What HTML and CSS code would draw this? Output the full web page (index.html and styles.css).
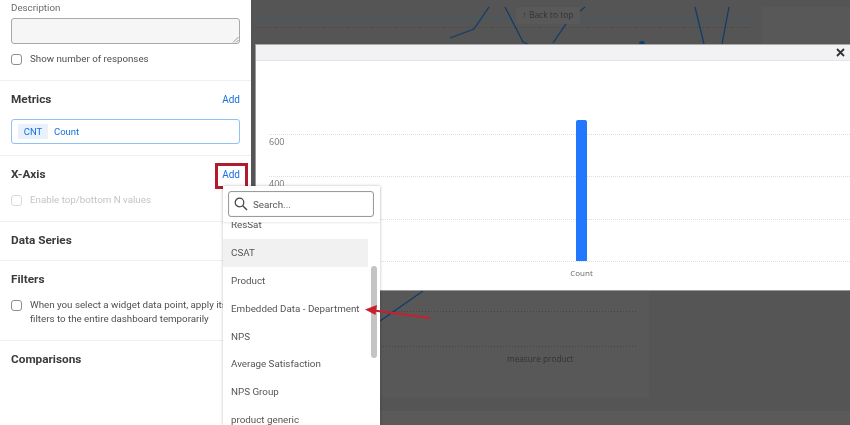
FILE: index.html
```html
<!DOCTYPE html>
<html lang="en">
<head>
<meta charset="utf-8">
<title>Widget editor</title>
<link rel="stylesheet" href="styles.css">
</head>
<body>
<div class="stage">
  <aside class="panel">
    <section class="sec sec-desc">
      <div class="label">Description</div>
      <div class="textarea">
        <svg class="grip" width="7" height="7" viewBox="0 0 7 7"><path d="M1 6.5 6.5 1M4 6.5 6.5 4" stroke="#999" fill="none"/></svg>
      </div>
      <div class="check-row"><span class="box"></span><span>Show number of responses</span></div>
    </section>
    <section class="sec sec-metrics">
      <div class="sec-head"><h3>Metrics</h3><a class="add">Add</a></div>
      <div class="metric"><span class="chip">CNT</span><span>Count</span></div>
    </section>
    <section class="sec sec-x">
      <div class="sec-head"><h3>X-Axis</h3><a class="add add-marked">Add</a></div>
      <div class="check-row disabled"><span class="box"></span><span>Enable top/bottom N values</span></div>
    </section>
    <section class="sec sec-series">
      <div class="sec-head"><h3>Data Series</h3></div>
    </section>
    <section class="sec sec-filters">
      <div class="sec-head"><h3>Filters</h3></div>
      <div class="check-row wrap"><span class="box"></span><span>When you select a widget data point, apply its<br>filters to the entire dashboard temporarily</span></div>
    </section>
    <section class="sec sec-comp">
      <div class="sec-head"><h3>Comparisons</h3></div>
    </section>
  </aside>

  <div class="backdrop">
    <div class="card card-right"></div>
    <div class="card card-low"></div>
    <div class="band"></div>
    <svg class="bg-lines" width="600" height="425" viewBox="250 0 600 425">
      <path d="M250 19H515M580 19H750" stroke="#3f6068" stroke-width="1" fill="none"/>
      <path d="M250 27.500H750M383 311.500H638M383 346.500H638" stroke="#444" stroke-dasharray="1 2" fill="none"/>
      <path d="M450 38 474 29 489 7M505 7 523 42 528 44M553 43 568 21 585 7M695 7 704 44M729 7 722 44M380 321 423 291" stroke="#123c69" stroke-width="1.300" fill="none"/>
      <circle cx="642" cy="44" r="3" fill="#123c69"/>
    </svg>
    <div class="back-top">↑ Back to top</div>
    <div class="measure">measure product</div>
  </div>

  <div class="modal">
    <div class="modal-head">
      <svg width="9" height="9" viewBox="0 0 9 9"><path d="M1 1 8 8M8 1 1 8" stroke="#333" stroke-width="1.800" fill="none"/></svg>
    </div>
    <div class="chart">
      <div class="grid-row first"><span class="tick">600</span></div>
      <div class="grid-row"><span class="tick">400</span></div>
      <div class="grid-row"></div>
      <div class="grid-row"></div>
      <div class="bar"></div>
      <div class="cat">Count</div>
    </div>
  </div>

  <div class="drop">
    <div class="search-wrap">
      <div class="search">
        <svg width="14" height="14" viewBox="0 0 14 14"><circle cx="5.500" cy="5.500" r="4.300" stroke="#444" stroke-width="1.200" fill="none"/><path d="M8.700 8.700 13 13" stroke="#444" stroke-width="1.400" fill="none"/></svg>
        <span>Search...</span>
      </div>
    </div>
    <div class="list">
      <div class="items">
        <div class="item">ResSat</div>
        <div class="item active">CSAT</div>
        <div class="item">Product</div>
        <div class="item">Embedded Data - Department</div>
        <div class="item">NPS</div>
        <div class="item">Average Satisfaction</div>
        <div class="item">NPS Group</div>
        <div class="item">product generic</div>
      </div>
      <div class="track"><div class="thumb"></div></div>
    </div>
  </div>

  <svg class="arrow" width="70" height="16" viewBox="364 304 70 16">
    <path d="M374 310.500 430 318" stroke="#c8202f" stroke-width="2.200" fill="none"/>
    <path d="M365 309.500 377 305 375.500 315Z" fill="#c8202f"/>
  </svg>
</div>
</body>
</html>
```

FILE: styles.css
```css
* { box-sizing: border-box; }
html, body { margin: 0; padding: 0; }
body { width: 850px; height: 425px; overflow: hidden; font-family: Roboto, "Liberation Sans", sans-serif; color: #525252; }
.stage { position: relative; width: 850px; height: 425px; overflow: hidden; background: #555; filter: blur(.3px); }

.panel { position: relative; z-index: 2; width: 251px; height: 425px; background: #fff; overflow: hidden; font-size: 9.750px; }
.sec { padding: 0 11px; border-bottom: 1px solid #efefef; }
.sec-comp { border-bottom: 0; }
.sec-desc { height: 81px; }
.sec-metrics { height: 75px; }
.sec-x { height: 66px; }
.sec-series { height: 39px; }
.sec-filters { height: 80px; }
.label { height: 18px; padding-top: 1px; line-height: 14px; color: #6b6b6b; }
.textarea { position: relative; width: 229px; height: 26px; border: 1px solid #a9a9a9; border-radius: 3px; background: #f6f6f6; }
.grip { position: absolute; right: 0; bottom: 0; }
.check-row { display: flex; align-items: center; gap: 8px; height: 12px; margin-top: 9px; color: #4f4f4f; line-height: 14px; }
.box { flex: none; width: 11px; height: 11px; border: 1px solid #8e8e8e; border-radius: 3px; background: #fff; }
.check-row.disabled { color: #c4c4c4; margin-top: 2px; }
.check-row.disabled .box { border-color: #d9d9d9; }
.check-row.wrap { align-items: flex-start; height: 28px; margin-top: 1px; }
.check-row.wrap .box { margin-top: 2px; }
.check-row.wrap span + span { white-space: nowrap; }
.sec-head { display: flex; justify-content: space-between; align-items: center; height: 36px; }
h3 { margin: 0; font-size: 11.800px; font-weight: 700; color: #3b3b3b; }
.add { color: #1670e0; font-size: 10px; }
.add-marked { position: relative; }
.add-marked::after { content: ""; position: absolute; left: -7px; right: -8px; top: 50%; margin-top: -11px; height: 20px; border: 3px solid #b01c2e; }
.metric { display: flex; align-items: center; gap: 6px; width: 229px; height: 25px; margin-top: 2px; padding: 0 6px; border: 1px solid #8fc0f6; border-radius: 3px; color: #1670e0; font-size: 9.500px; }
.chip { width: 30px; height: 15px; line-height: 15px; text-align: center; background: #e9f2fc; }

.backdrop { position: absolute; inset: 0; z-index: 0; font-family: "Open Sans", sans-serif; }
.card { position: absolute; background: #585858; }
.card-right { left: 762px; top: 7px; width: 88px; height: 40px; }
.card-low { left: 251px; top: 280px; width: 398px; height: 118px; }
.band { position: absolute; left: 251px; right: 0; top: 411px; height: 14px; background: #5a5a5a; }
.bg-lines { position: absolute; left: 250px; top: 0; }
.back-top { position: absolute; left: 516px; top: 7px; width: 64px; height: 17px; line-height: 16px; font-size: 8.500px; color: #333; background: #595959; text-align: center; white-space: nowrap; border-radius: 2px; }
.measure { position: absolute; left: 507px; top: 352px; font-size: 8.250px; line-height: 14px; color: #333; }

.modal { position: absolute; z-index: 1; left: 255px; top: 44px; width: 595px; height: 247px; background: #fff; border: 1px solid #999; border-right: 0; border-top-color: #aaa; font-family: "Open Sans", sans-serif; }
.modal-head { display: flex; justify-content: flex-end; align-items: center; height: 16px; padding-right: 5px; background: #f2f2f4; border-bottom: 1px solid #e4e4e6; }
.chart { position: relative; height: 229px; padding-top: 73px; }
.grid-row { position: relative; height: 42.300px; margin-left: 13px; border-top: 1px dotted #ddd; }
.tick { position: absolute; left: 0; top: 1px; font-size: 9px; line-height: 12px; color: #777; }
.bar { position: absolute; left: 320px; top: 59px; width: 11px; height: 141px; background: #2277ff; border-radius: 2px 2px 0 0; }
.cat { position: absolute; left: 305px; width: 41px; top: 205px; font-size: 8px; line-height: 13px; color: #666; text-align: center; }

.drop { position: absolute; z-index: 3; left: 223px; top: 186px; width: 157px; height: 239px; background: #fff; box-shadow: 0 0 3px rgba(0,0,0,.25); font-size: 9.800px; color: #555; }
.search-wrap { height: 36px; padding: 5px 6px 0 5px; box-shadow: 0 1px 2px rgba(0,0,0,.1); position: relative; z-index: 1; background: #fff; }
.search { display: flex; align-items: center; gap: 5px; height: 26px; padding: 0 5px; border: 1px solid #9b9b9b; border-radius: 3px; box-shadow: inset 0 0 1px #bbb; }
.list { display: flex; height: 203px; overflow: hidden; }
.items { width: 145px; margin-top: -11px; }
.item { height: 27.900px; line-height: 27.900px; padding-left: 8px; white-space: nowrap; }
.item.active { background: #f1f1f1; }
.track { flex: 1; padding: 44px 3px 0 3px; }
.thumb { width: 6px; height: 92px; border-radius: 3px; background: #c4c4c4; }
.arrow { position: absolute; z-index: 4; left: 364px; top: 304px; }
```
